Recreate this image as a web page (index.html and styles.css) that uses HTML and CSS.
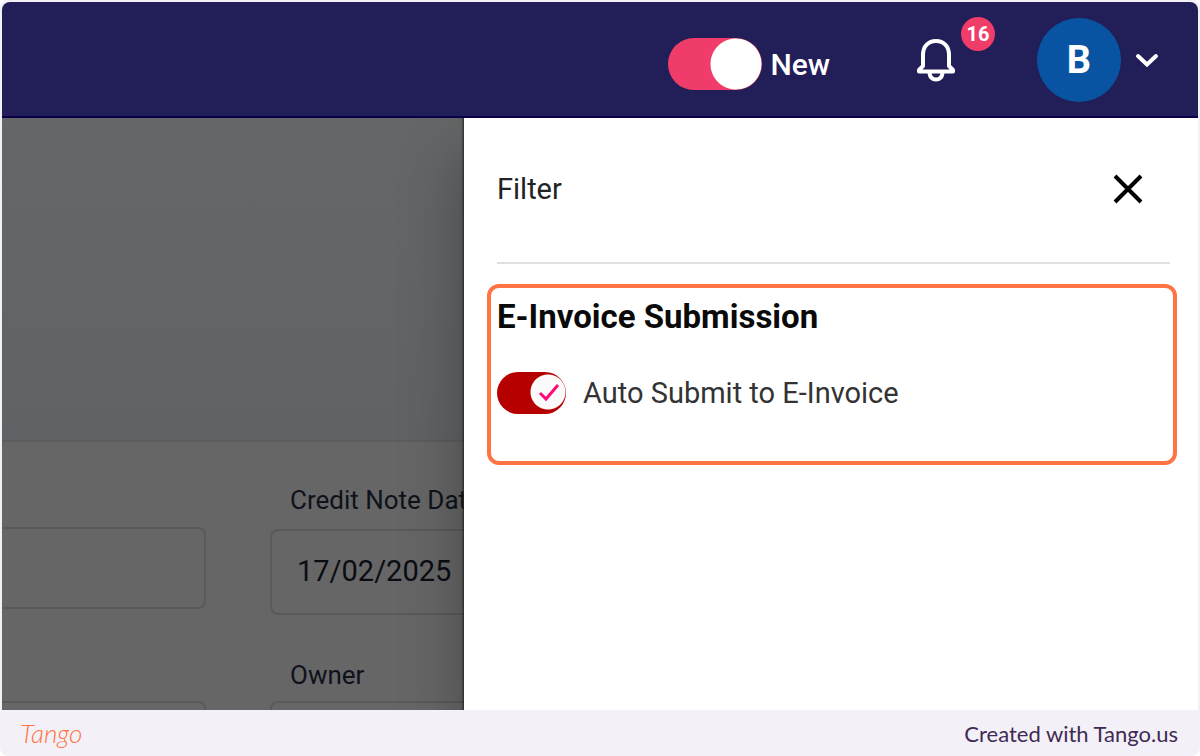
FILE: index.html
```html
<!DOCTYPE html>
<html lang="en">
<head>
<meta charset="utf-8">
<title>Filter</title>
<meta name="viewport" content="width=device-width, initial-scale=1">
<link rel="stylesheet" href="styles.css">
</head>
<body>
<div class="frame">
  <div class="app">
    <header class="topbar">
      <label class="new-toggle"><input class="switch switch-new" type="checkbox" role="switch" checked>New</label>
      <button class="bell" type="button" aria-label="Notifications">
        <svg width="40" height="46" viewBox="0 0 40 46" fill="none" stroke="#fff" stroke-width="4" stroke-linejoin="round" stroke-linecap="round" aria-hidden="true">
          <path d="M7 29V18C7 9 12.500 4 20 4S33 9 33 18V29L37 33V34.500H3V33Z"/>
          <path d="M13.500 36C14 40.500 16.500 42.500 20 42.500S26 40.500 26.500 36"/>
        </svg>
        <span class="badge">16</span>
      </button>
      <button class="account" type="button" aria-label="Account">
        <span class="avatar">B</span>
        <svg width="24" height="16" viewBox="0 0 24 16" fill="none" stroke="#fff" stroke-width="4" stroke-linecap="round" aria-hidden="true"><path d="M3 4L12 12.500L21 4"/></svg>
      </button>
    </header>
    <main class="stage">
      <section class="page">
        <div class="page-top"></div>
        <form class="form">
          <div class="column column-left">
            <input class="box box-short" type="text" aria-label="Reference">
            <input class="box" type="text" aria-label="Details">
          </div>
          <div class="column column-right">
            <label class="field-label" for="date">Credit Note Date</label>
            <input class="box" id="date" type="text" value="17/02/2025">
            <label class="field-label owner-label" for="owner">Owner</label>
            <input class="box" id="owner" type="text">
          </div>
        </form>
      </section>
      <aside class="panel">
        <div class="panel-head">
          <h1 class="panel-title">Filter</h1>
          <button class="close" type="button" aria-label="Close">
            <svg width="32" height="32" viewBox="0 0 32 32" fill="none" stroke="#000" stroke-width="4" aria-hidden="true"><path d="M3 3L29 29M29 3L3 29"/></svg>
          </button>
        </div>
        <section class="highlight">
          <h2 class="group-title">E-Invoice Submission</h2>
          <label class="option">
            <span class="switch-wrap">
              <input class="switch switch-submit" type="checkbox" role="switch" checked>
              <svg class="tick" width="22" height="20" viewBox="0 0 22 20" fill="none" stroke="#ff0a78" stroke-width="3" aria-hidden="true"><path d="M2 11L8 17L20 3"/></svg>
            </span>
            Auto Submit to E-Invoice
          </label>
        </section>
      </aside>
    </main>
  </div>
  <footer class="footer">
    <span class="logo">Tango</span>
    <span>Created with Tango.us</span>
  </footer>
</div>
</body>
</html>
```
FILE: styles.css
```css
* { box-sizing: border-box; }
body { margin: 0; background: #fff; font-family: Roboto, "Liberation Sans", sans-serif; }
button { padding: 0; border: 0; background: none; font: inherit; color: inherit; }
h1, h2 { margin: 0; }
svg { display: block; }

.frame {
  display: flex;
  flex-direction: column;
  height: 100vh;
  min-height: 560px;
  padding: 2px 2px 0;
  border-radius: 8px;
  background: #f3f1f7;
}
.app {
  flex: 1;
  min-height: 0;
  display: flex;
  flex-direction: column;
  overflow: hidden;
  border-radius: 8px 8px 0 0;
}

.topbar {
  flex: none;
  display: flex;
  justify-content: flex-end;
  height: 116px;
  padding: 15px 39px 0 0;
  border-bottom: 2px solid #080048;
  background: #221e58;
  color: #fff;
}
.new-toggle {
  display: flex;
  align-items: center;
  gap: 8px;
  height: 94px;
  font-size: 30px;
  font-weight: 500;
}
.switch { appearance: none; display: block; margin: 0; border-radius: 32px; }
.switch-new {
  width: 94px;
  height: 52px;
  background: radial-gradient(circle at 68px 26px, #fff 25px, #f03c69 26px);
}
.bell { position: relative; height: 86px; margin-left: 86px; }
.badge {
  position: absolute;
  top: 0;
  left: 45px;
  width: 34px;
  height: 34px;
  border-radius: 50%;
  background: #f03c69;
  font-size: 20px;
  font-weight: 700;
  line-height: 34px;
  text-align: center;
}
.account { display: flex; align-items: center; gap: 14px; height: 86px; margin-left: 81px; }
.avatar {
  width: 84px;
  height: 84px;
  border-radius: 50%;
  background: #0854a3;
  font-size: 38px;
  font-weight: 700;
  line-height: 84px;
}

.stage { flex: 1; display: flex; min-height: 0; overflow: hidden; background: #666; }
.page { flex: 1; min-width: 0; display: flex; flex-direction: column; }
.page-top {
  flex: none;
  height: 324px;
  border-bottom: 2px solid #5c5d5d;
  background: linear-gradient(#656667, #606365);
}
.form { flex: 1; display: flex; gap: 64px; min-height: 0; overflow: hidden; }
.column { display: flex; flex-direction: column; }
.column-left { flex: 0 0 204px; gap: 92px; padding-top: 85px; }
.column-left .box { border-left: 0; border-radius: 0 8px 8px 0; }
.column-right { flex: 1; min-width: 0; padding-top: 42px; }
.field-label {
  padding-left: 20px;
  margin-bottom: 13px;
  color: #0e121b;
  font-size: 26px;
  line-height: 32px;
  white-space: nowrap;
}
.owner-label { margin-top: 44px; margin-bottom: 10px; }
.box {
  flex: none;
  width: 100%;
  height: 86px;
  padding: 0 0 2px 25px;
  border: 2px solid #5a5a5a;
  border-radius: 8px;
  background: transparent;
  color: #0b0d14;
  font: 29px Roboto, "Liberation Sans", sans-serif;
}
.column-left .box-short { height: 82px; }
.column-right .box { border-right: 0; border-radius: 8px 0 0 8px; }

.panel {
  position: relative;
  flex: 0 0 734px;
  max-width: 75%;
  padding: 0 21px 0 23px;
  background: #fff;
  box-shadow: 0 0 2px 1px #222, 0 32px 60px rgba(0, 0, 0, 0.3);
}
.panel-head {
  display: flex;
  align-items: center;
  justify-content: space-between;
  height: 146px;
  margin: 0 7px 20px 10px;
  padding: 0 26px 2px 0;
  border-bottom: 2px solid #e0e0e0;
}
.panel-title { color: #222; font-size: 29px; font-weight: 400; line-height: 36px; }
.highlight {
  min-height: 181px;
  padding: 12px 6px;
  border: 4px solid #ff7442;
  border-radius: 12px;
}
.group-title { color: #0a0a0a; font-size: 33px; font-weight: 700; line-height: 34px; }
.option {
  display: flex;
  align-items: center;
  gap: 17px;
  margin-top: 37px;
  color: #333;
  font-size: 29px;
  line-height: 44px;
}
.switch-wrap { position: relative; }
.switch-submit {
  width: 69px;
  height: 42px;
  background: radial-gradient(circle at 51px 20px, #fafafa 17px, #b60000 18px);
}
.tick { position: absolute; top: 10px; left: 41px; }

.footer {
  flex: none;
  display: flex;
  align-items: center;
  justify-content: space-between;
  height: 46px;
  padding: 0 20px 0 18px;
  color: #3f2a54;
  font: 22px Lato, "Liberation Sans", sans-serif;
}
.logo { color: #ff7442; font-size: 26px; font-style: italic; font-weight: 300; }
```
